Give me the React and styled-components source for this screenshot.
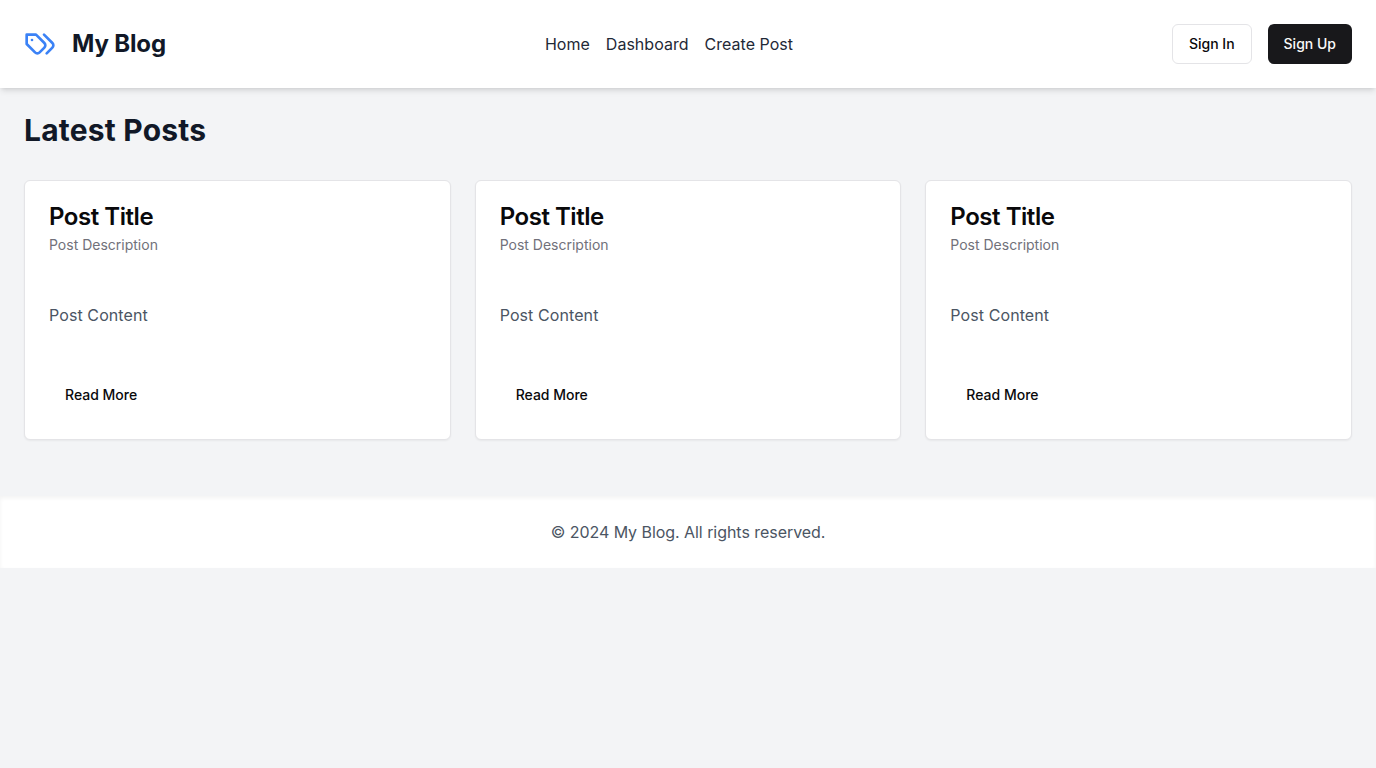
import React from "react";
import styled, { createGlobalStyle, css } from "styled-components";

const GlobalStyle = createGlobalStyle`
  *, *::before, *::after { box-sizing: border-box; }
  body {
    margin: 0;
    background: #f3f4f6;
    color: #09090b;
    font-family: Inter, "Liberation Sans", sans-serif;
    font-size: 16px;
    line-height: 24px;
  }
  h1, h2, h3, p { margin: 0; }
`;

const Page = styled.div`
  min-height: 100vh;
  background: #f3f4f6;
`;

const Header = styled.header`
  display: flex;
  align-items: center;
  justify-content: space-between;
  padding: 24px;
  background: #fff;
  box-shadow: 0 4px 6px -1px rgba(0, 0, 0, 0.1), 0 2px 4px -2px rgba(0, 0, 0, 0.1);
`;

const Brand = styled.div`
  display: flex;
  align-items: center;
  gap: 16px;
`;

const LogoIcon = styled.svg`
  display: block;
  width: 32px;
  height: 32px;
  fill: none;
  stroke: #3b82f6;
  stroke-width: 2;
  stroke-linecap: round;
  stroke-linejoin: round;
`;

const BrandName = styled.h1`
  font-size: 24px;
  line-height: 32px;
  font-weight: 700;
  letter-spacing: -0.15px;
  color: #111827;
`;

const Nav = styled.nav`
  display: flex;
  gap: 16px;
`;

const NavLink = styled.a`
  color: #1f2937;
  letter-spacing: 0.02px;
  text-decoration: none;
`;

const Actions = styled.div`
  display: flex;
  gap: 16px;
`;

const variants = {
  outline: css`
    border: 1px solid #e4e4e7;
    background: #fff;
    color: #09090b;
  `,
  solid: css`
    background: #18181b;
    color: #fafafa;
  `,
  ghost: css`
    background: transparent;
    color: #09090b;
  `,
};

const Button = styled.button`
  display: inline-flex;
  align-items: center;
  justify-content: center;
  height: 40px;
  padding: 8px 16px;
  border: 0;
  border-radius: 6px;
  font-family: inherit;
  font-size: 14px;
  line-height: 20px;
  font-weight: 500;
  white-space: nowrap;
  cursor: pointer;
  ${({ $variant }) => variants[$variant]}
`;

const Main = styled.main`
  padding: 24px;
`;

const SectionTitle = styled.h2`
  margin-bottom: 32px;
  font-size: 30px;
  line-height: 36px;
  font-weight: 700;
  letter-spacing: 0.2px;
  color: #111827;
`;

const PostGrid = styled.div`
  display: grid;
  grid-template-columns: repeat(3, minmax(0, 1fr));
  gap: 24px;
`;

const Card = styled.article`
  border: 1px solid #e4e4e7;
  border-radius: 6px;
  background: #fff;
  box-shadow: 0 1px 2px 0 rgba(0, 0, 0, 0.05);
`;

const CardHeader = styled.div`
  display: flex;
  flex-direction: column;
  gap: 6px;
  padding: 24px;
`;

const CardTitle = styled.h3`
  font-size: 24px;
  line-height: 24px;
  font-weight: 600;
  letter-spacing: -0.46px;
`;

const CardDescription = styled.p`
  font-size: 14px;
  line-height: 20px;
  color: #71717a;
`;

const CardContent = styled.div`
  padding: 24px;
  letter-spacing: 0.09px;
  color: #4b5563;
`;

const CardFooter = styled.div`
  display: flex;
  align-items: center;
  padding: 24px;
`;

const Footer = styled.footer`
  margin-top: 32px;
  padding: 24px;
  background: #fff;
  color: #4b5563;
  letter-spacing: -0.05px;
  text-align: center;
  box-shadow: inset 0 2px 4px 0 rgba(0, 0, 0, 0.05);
`;

const posts = [1, 2, 3].map((id) => ({
  id,
  title: "Post Title",
  description: "Post Description",
  content: "Post Content",
}));

function TagsLogo() {
  return (
    <LogoIcon viewBox="0 0 24 24" aria-hidden="true">
      <path d="M9 5H2v7l6.29 6.29c.94.94 2.48.94 3.42 0l3.58-3.58c.94-.94.94-2.48 0-3.42L9 5Z" />
      <path d="M6 9.01V9" />
      <path d="m15 5 6.3 6.3a2.4 2.4 0 0 1 0 3.4L17 19" />
    </LogoIcon>
  );
}

function PostCard({ post }) {
  return (
    <Card>
      <CardHeader>
        <CardTitle>{post.title}</CardTitle>
        <CardDescription>{post.description}</CardDescription>
      </CardHeader>
      <CardContent>
        <p>{post.content}</p>
      </CardContent>
      <CardFooter>
        <Button $variant="ghost">Read More</Button>
      </CardFooter>
    </Card>
  );
}

export default function App() {
  return (
    <Page>
      <GlobalStyle />
      <Header>
        <Brand>
          <TagsLogo />
          <BrandName>My Blog</BrandName>
        </Brand>
        <Nav>
          <NavLink href="#">Home</NavLink>
          <NavLink href="#">Dashboard</NavLink>
          <NavLink href="#">Create Post</NavLink>
        </Nav>
        <Actions>
          <Button $variant="outline">Sign In</Button>
          <Button $variant="solid">Sign Up</Button>
        </Actions>
      </Header>
      <Main>
        <SectionTitle>Latest Posts</SectionTitle>
        <PostGrid>
          {posts.map((post) => (
            <PostCard key={post.id} post={post} />
          ))}
        </PostGrid>
      </Main>
      <Footer>
        <p>© 2024 My Blog. All rights reserved.</p>
      </Footer>
    </Page>
  );
}
